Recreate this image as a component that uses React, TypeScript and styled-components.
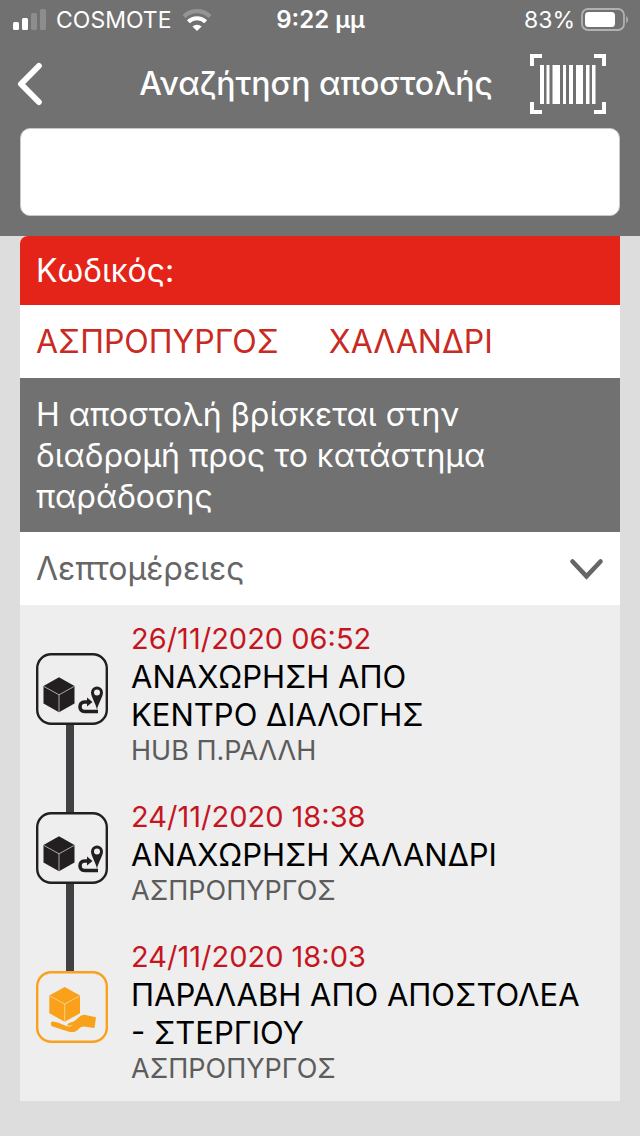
import React, { useState } from "react";
import styled, { createGlobalStyle } from "styled-components";

const GlobalStyle = createGlobalStyle`
  *, *::before, *::after { box-sizing: border-box; }
  body {
    margin: 0;
    background: #dddddd;
    font-family: Inter, "Liberation Sans", sans-serif;
  }
  h1, p, ol { margin: 0; padding: 0; }
  button { border: 0; padding: 0; background: none; font: inherit; color: inherit; cursor: pointer; }
  svg { display: block; }
`;

const Header = styled.header`
  background: #717171;
  color: #ffffff;
  padding-bottom: 20px;
`;

const StatusBar = styled.div`
  display: grid;
  grid-template-columns: 1fr auto 1fr;
  align-items: center;
  height: 40px;
  padding: 0 11px 0 12px;
  font-size: 23px;
  line-height: 40px;
`;

const StatusGroup = styled.div<{ $end?: boolean }>`
  display: flex;
  align-items: center;
  justify-content: ${(p) => (p.$end ? "flex-end" : "flex-start")};
  gap: ${(p) => (p.$end ? "6px" : "10px")};
`;

const Clock = styled.time`
  font-size: 24px;
  font-weight: 600;
`;

const TitleBar = styled.div`
  display: grid;
  grid-template-columns: 1fr auto 1fr;
  align-items: center;
  height: 88px;
  padding: 0 24px 0 16px;
`;

const Title = styled.h1`
  font-size: 32px;
  line-height: 40px;
  font-weight: 500;
`;

const BackButton = styled.button`
  justify-self: start;
`;

const ScanButton = styled.button`
  justify-self: end;
  padding-right: 10px;
`;

const SearchForm = styled.form`
  padding: 0 20px;
`;

const SearchInput = styled.input`
  display: block;
  width: 100%;
  height: 88px;
  padding: 0 16px;
  border: 1px solid #c8c8c8;
  border-radius: 10px;
  background: #ffffff;
  color: #333333;
  font: inherit;
  font-size: 32px;
  outline: none;
`;

const Card = styled.main`
  margin: 0 20px 35px;
  border-top-left-radius: 8px;
  overflow: hidden;
  font-size: 32px;
  line-height: 41px;
`;

const CodeRow = styled.p`
  padding: 14px 16px;
  background: #e52419;
  color: #ffffff;
`;

const RouteRow = styled.div`
  display: flex;
  gap: 50px;
  padding: 16px;
  background: #ffffff;
  color: #c92a22;
`;

const StatusMessage = styled.p`
  padding: 16px 80px 15px 16px;
  background: #717171;
  color: #ffffff;
`;

const DetailsToggle = styled.button<{ $open: boolean }>`
  display: flex;
  align-items: center;
  justify-content: space-between;
  width: 100%;
  padding: 16px;
  background: #ffffff;
  color: #666666;
  text-align: left;

  svg { transform: ${(p) => (p.$open ? "none" : "rotate(180deg)")}; }
`;

const Timeline = styled.ol`
  list-style: none;
  background: #eeeeee;
`;

const Stop = styled.li`
  display: flex;
  gap: 23px;
  padding: 0 16px;
`;

const Track = styled.div`
  display: flex;
  flex-direction: column;
  align-items: center;
  flex: none;
`;

const Rail = styled.span<{ $visible: boolean; $after?: boolean }>`
  width: 8px;
  margin-right: 4px;
  flex: 1 0 ${(p) => (p.$after ? "10px" : "0px")};
  background: ${(p) => (p.$visible ? "#414144" : "transparent")};
`;

const StopText = styled.div`
  padding: 15px 0;
  min-width: 0;
`;

const StopDate = styled.time`
  display: block;
  font-size: 29px;
  line-height: 38px;
  color: #c5161f;
`;

const StopTitle = styled.p`
  font-size: 31px;
  line-height: 38px;
  color: #000000;
  white-space: pre-line;
`;

const StopPlace = styled.p`
  font-size: 27px;
  line-height: 34px;
  color: #5c5c5c;
`;

const SignalIcon = () => (
  <svg width="34" height="22" viewBox="0 0 34 22" fill="#fff" aria-hidden="true">
    <rect x="1" y="13" width="6" height="8" rx="1.5" />
    <rect x="10" y="9" width="6" height="12" rx="1.5" />
    <rect x="19" y="4" width="6" height="17" rx="1.5" opacity=".2" />
    <rect x="28" y="0" width="6" height="21" rx="1.5" opacity=".2" />
  </svg>
);

const WifiIcon = () => (
  <svg width="30" height="22" viewBox="0 0 30 22" fill="none" stroke="#fff" strokeWidth="4.200" aria-hidden="true">
    <path d="M2 7.500A18.500 18.500 0 0 1 28 7.500" opacity=".25" />
    <path d="M6.400 12.700A12.400 12.400 0 0 1 23.600 12.700" />
    <path d="M15 22L10.400 17.600A6.600 6.600 0 0 1 19.600 17.600Z" fill="#fff" stroke="none" />
  </svg>
);

const BatteryIcon = () => (
  <svg width="48" height="24" viewBox="0 0 48 24" aria-hidden="true">
    <rect x="1" y="1" width="42" height="21" rx="6" fill="none" stroke="#fff" strokeWidth="1.8" opacity=".45" />
    <rect x="4" y="4" width="30" height="15" rx="3.5" fill="#fff" />
    <path d="M45.2 8.2C47.6 9.2 47.6 14 45.2 15Z" fill="#fff" opacity=".45" />
  </svg>
);

const BackIcon = () => (
  <svg width="28" height="44" viewBox="0 0 28 44" fill="none" stroke="#fff" strokeWidth="6" strokeLinecap="round" strokeLinejoin="round" aria-hidden="true">
    <path d="M22.800 4L5 22L22.800 40" />
  </svg>
);

const BarcodeIcon = () => (
  <svg width="76" height="60" viewBox="0 0 76 60" aria-hidden="true">
    <path d="M2 12V2H12M64 2H74V12M74 48V58H64M12 58H2V48" fill="none" stroke="#fff" strokeWidth="4" />
    <path d="M10 11h4v39h-4zM16.500 11h3v39h-3zM22.500 11h7.500v39h-7.500zM33 11h3v39h-3zM39 11h4v39h-4zM46 11h7v39h-7zM56 11h3.500v39h-3.500zM62 11h3.500v39h-3.500z" fill="#fff" />
  </svg>
);

const ChevronIcon = () => (
  <svg width="35" height="22" viewBox="0 0 35 22" fill="none" stroke="#666" strokeWidth="4.6" strokeLinecap="round" aria-hidden="true">
    <path d="M3.500 3.500L17.500 18.300L31.500 3.500" />
  </svg>
);

const DepartureIcon = () => (
  <svg width="72" height="72" viewBox="0 0 72 72" fill="none" stroke="#231f20" aria-hidden="true">
    <rect x="1.200" y="1.200" width="69.600" height="69.600" rx="14" strokeWidth="2.400" />
    <path d="M23 24.300L38.500 33V50.500L23 59.300L7.500 50.500V33Z" fill="#231f20" stroke="none" />
    <path d="M8 33.500L23 41.800L38 33.500M23 41.800V58.800" stroke="#a9a9a9" strokeWidth="1" />
    <path d="M62 58.500H48.500C42.500 58.500 42.500 49 48.500 49H53" strokeWidth="3.600" />
    <path d="M51 44.500L56.500 49L51 53.500Z" fill="#231f20" stroke="none" />
    <path d="M61 57C60 51 55 44 55 39.600A6 6 0 0 1 67 39.600C67 44 62 51 61 57ZM61 36.500A3 3 0 1 0 61 42.500A3 3 0 1 0 61 36.500Z" fill="#231f20" fillRule="evenodd" stroke="none" />
  </svg>
);

const PickupIcon = () => (
  <svg width="72" height="72" viewBox="0 0 72 72" fill="none" aria-hidden="true">
    <rect x="1.200" y="1.200" width="69.600" height="69.600" rx="14" stroke="#f9a11b" strokeWidth="2.400" />
    <path d="M28.700 16L44 24.500V42.300L28.700 50.700L13.300 42.300V24.500Z" fill="#f9a11b" />
    <path d="M13.800 25L28.700 33L43.500 25M28.700 33V50" stroke="#fbd08a" strokeWidth="1" />
    <path d="M16.800 50.500C14.300 50.500 14 54.500 16.500 55.500L33 60.700C37 61.800 39.700 60.700 42 58.700C44.200 56.700 45 55.600 48 55.600L58.500 57L60 46.300L48.500 43.700C44.500 44 41.800 47.200 39.300 49.400C36.700 51.400 33.500 51.300 31.800 52.700C31 53.700 31.500 54.500 32.600 54.700L36.500 54.300C34 56 31.500 55.700 28.300 54.300C24.500 52.500 20.500 50.600 16.800 50.500Z" fill="#f9a11b" />
  </svg>
);

type Event = {
  date: string;
  iso: string;
  title: string;
  place: string;
  kind: "departure" | "pickup";
};

const events: Event[] = [
  { date: "26/11/2020 06:52", iso: "2020-11-26T06:52", title: "ΑΝΑΧΩΡΗΣΗ ΑΠΟ\nΚΕΝΤΡΟ ΔΙΑΛΟΓΗΣ", place: "HUB Π.ΡΑΛΛΗ", kind: "departure" },
  { date: "24/11/2020 18:38", iso: "2020-11-24T18:38", title: "ΑΝΑΧΩΡΗΣΗ ΧΑΛΑΝΔΡΙ", place: "ΑΣΠΡΟΠΥΡΓΟΣ", kind: "departure" },
  { date: "24/11/2020 18:03", iso: "2020-11-24T18:03", title: "ΠΑΡΑΛΑΒΗ ΑΠΟ ΑΠΟΣΤΟΛΕΑ\n- ΣΤΕΡΓΙΟΥ", place: "ΑΣΠΡΟΠΥΡΓΟΣ", kind: "pickup" },
];

export default function App() {
  const [query, setQuery] = useState("");
  const [open, setOpen] = useState(true);

  return (
    <>
      <GlobalStyle />
      <Header>
        <StatusBar>
          <StatusGroup>
            <SignalIcon />
            <span>COSMOTE</span>
            <WifiIcon />
          </StatusGroup>
          <Clock>9:22 μμ</Clock>
          <StatusGroup $end>
            <span>83%</span>
            <BatteryIcon />
          </StatusGroup>
        </StatusBar>
        <TitleBar>
          <BackButton type="button" aria-label="Πίσω">
            <BackIcon />
          </BackButton>
          <Title>Αναζήτηση αποστολής</Title>
          <ScanButton type="button" aria-label="Σάρωση">
            <BarcodeIcon />
          </ScanButton>
        </TitleBar>
        <SearchForm role="search" onSubmit={(e) => e.preventDefault()}>
          <SearchInput
            type="text"
            aria-label="Αναζήτηση αποστολής"
            value={query}
            onChange={(e) => setQuery(e.target.value)}
          />
        </SearchForm>
      </Header>
      <Card>
        <CodeRow>Κωδικός:</CodeRow>
        <RouteRow>
          <span>ΑΣΠΡΟΠΥΡΓΟΣ</span>
          <span>ΧΑΛΑΝΔΡΙ</span>
        </RouteRow>
        <StatusMessage>Η αποστολή βρίσκεται στην διαδρομή προς το κατάστημα παράδοσης</StatusMessage>
        <DetailsToggle type="button" $open={open} aria-expanded={open} onClick={() => setOpen(!open)}>
          <span>Λεπτομέρειες</span>
          <ChevronIcon />
        </DetailsToggle>
        {open && (
          <Timeline>
            {events.map((event, i) => (
              <Stop key={event.iso}>
                <Track>
                  <Rail $visible={i > 0} />
                  {event.kind === "pickup" ? <PickupIcon /> : <DepartureIcon />}
                  <Rail $visible={i < events.length - 1} $after />
                </Track>
                <StopText>
                  <StopDate dateTime={event.iso}>{event.date}</StopDate>
                  <StopTitle>{event.title}</StopTitle>
                  <StopPlace>{event.place}</StopPlace>
                </StopText>
              </Stop>
            ))}
          </Timeline>
        )}
      </Card>
    </>
  );
}
